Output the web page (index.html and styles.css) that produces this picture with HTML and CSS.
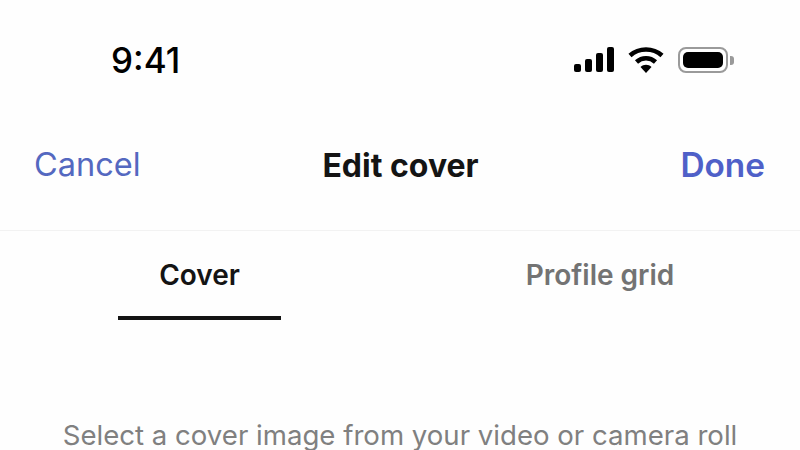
FILE: index.html
```html
<!DOCTYPE html>
<html lang="en">
<head>
  <meta charset="UTF-8" />
  <title>Edit cover</title>
  <link rel="stylesheet" href="styles.css">
</head>
<body>
  <!-- Status bar -->
  <div class="status-bar">
    <span class="clock">9:41</span>
    <div class="status-icons">
      <svg class="signal" width="40" height="26" viewBox="0 0 40 26">
        <rect x="0" y="17" width="7" height="8" rx="2" />
        <rect x="11" y="12" width="7" height="13" rx="2" />
        <rect x="22" y="6" width="7" height="19" rx="2" />
        <rect x="33" y="0" width="7" height="25" rx="2" />
      </svg>
      <svg class="wifi" width="36" height="28" viewBox="0 0 36 28">
        <path d="M2 9.5 C11 1.5 25 1.5 34 9.5" fill="none" stroke="#000" stroke-width="4.6" />
        <path d="M8.5 16 C14 11 22 11 27.500 16" fill="none" stroke="#000" stroke-width="4.6" />
        <path d="M12.500 21 C15.500 18 20.500 18 23.500 21 L18 27 Z" />
      </svg>
      <div class="battery">
        <div class="battery-body"><div class="battery-fill"></div></div>
        <div class="battery-cap"></div>
      </div>
    </div>
  </div>

  <!-- Nav bar -->
  <div class="nav-bar">
    <a class="nav-cancel">Cancel</a>
    <h1 class="nav-title">Edit cover</h1>
    <a class="nav-done">Done</a>
  </div>

  <!-- Tabs -->
  <div class="tabs">
    <div class="tab active"><span class="tab-label">Cover</span></div>
    <div class="tab"><span class="tab-label">Profile grid</span></div>
  </div>

  <p class="hint">Select a cover image from your video or camera roll</p>
</body>
</html>
```

FILE: styles.css
```css
/* Global styles */
body {
  margin: 0;
  width: 800px;
  height: 450px;
  overflow: hidden;
  background: #fefefe;
  color: #141414;
  font-family: Inter, "Liberation Sans", sans-serif;
}

/* Status bar */
.status-bar {
  height: 120px;
  box-sizing: border-box;
  padding: 40px 66px 0 111px;
  display: flex;
  justify-content: space-between;
  align-items: flex-start;
}
.clock {
  font-size: 35px;
  line-height: 41px;
  font-weight: 500;
  color: #000;
}
.status-icons {
  display: flex;
  align-items: center;
  gap: 14px;
  margin-top: 6px;
}
.status-icons svg {
  display: block;
  fill: #000;
}
.battery {
  display: flex;
  align-items: center;
  gap: 2px;
}
.battery-body {
  width: 50px;
  height: 26px;
  box-sizing: border-box;
  padding: 3px;
  border: 2px solid #9a9a9a;
  border-radius: 8px;
}
.battery-fill {
  height: 100%;
  background: #000;
  border-radius: 5px;
}
.battery-cap {
  width: 4px;
  height: 9px;
  background: #9a9a9a;
  border-radius: 0 3px 3px 0;
}

/* Nav bar */
.nav-bar {
  height: 111px;
  box-sizing: border-box;
  padding: 0 35px 21px 34px;
  display: grid;
  grid-template-columns: 1fr auto 1fr;
  align-items: center;
  border-bottom: 1px solid #f2f2f2;
}
.nav-title {
  margin: 0 0 0 2px;
  padding-top: 2px;
  font-size: 32px;
  font-weight: 700;
}
.nav-cancel,
.nav-done {
  font-size: 32.5px;
  color: #5468c0;
}
.nav-done {
  justify-self: end;
  font-size: 33.4px;
  font-weight: 600;
  color: #4f60c8;
}

/* Tabs */
.tabs {
  display: flex;
}
.tab {
  width: 400px;
  height: 89px;
  box-sizing: border-box;
  padding-top: 28px;
  display: flex;
  justify-content: center;
  font-size: 28px;
  line-height: 33px;
  font-weight: 600;
  color: #737373;
}
.tab-label {
  height: 61px;
  box-sizing: border-box;
}
.tab.active {
  color: #141414;
}
.tab.active .tab-label {
  width: 163px;
  margin-left: -1px;
  text-align: center;
  border-bottom: 4px solid #141414;
}

/* Hint text */
.hint {
  margin: 101px 0 0;
  text-align: center;
  font-size: 27.6px;
  line-height: 28px;
  color: #808080;
}
```
